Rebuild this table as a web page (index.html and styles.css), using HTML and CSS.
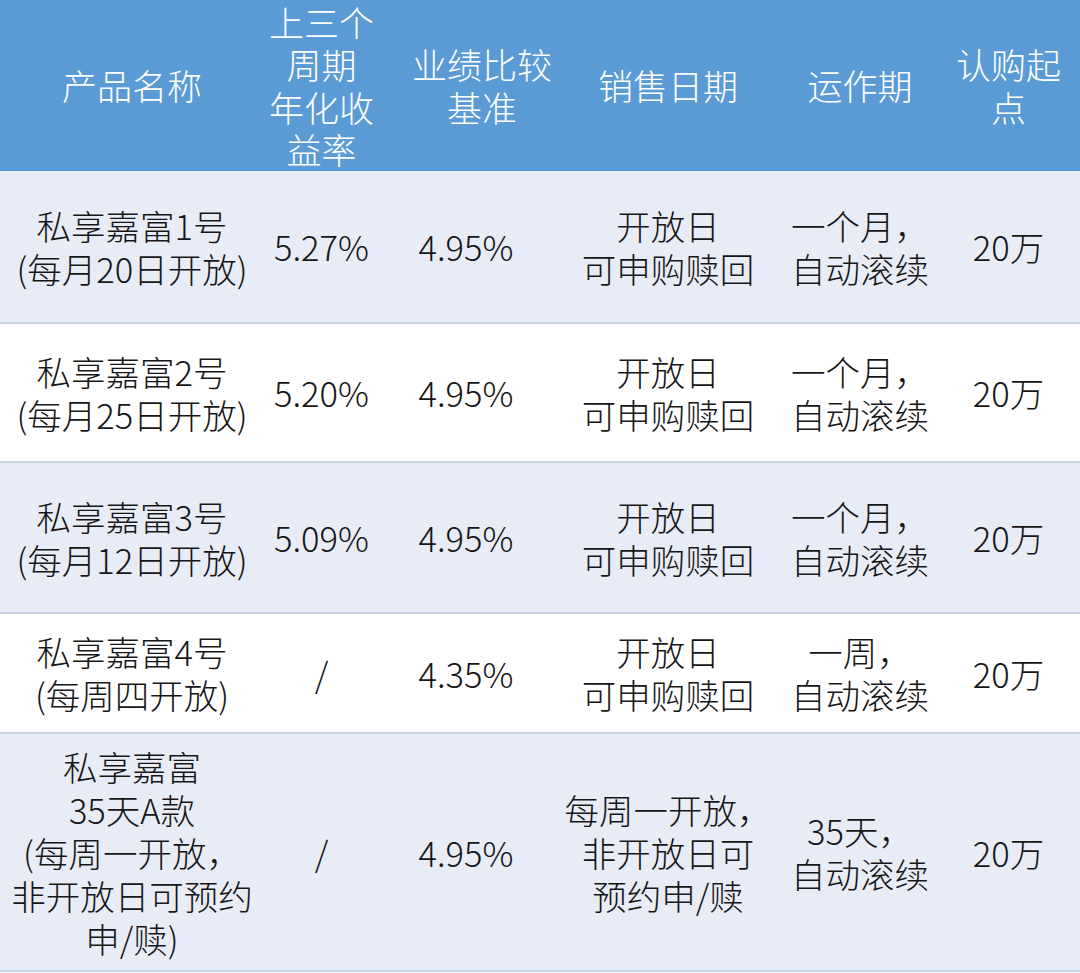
FILE: index.html
```html
<!DOCTYPE html>
<html lang="zh-CN">
<head>
<meta charset="utf-8">
<title>私享嘉富产品</title>
<link rel="stylesheet" href="styles.css">
</head>
<body>
<table class="products">
  <colgroup>
    <col class="c-name">
    <col class="c-yield">
    <col class="c-bench">
    <col class="c-sale">
    <col class="c-term">
    <col class="c-min">
  </colgroup>
  <thead>
    <tr class="head">
      <th>产品名称</th>
      <th>上三个<br>周期<br>年化收<br>益率</th>
      <th class="bench-head">业绩比较<br>基准</th>
      <th>销售日期</th>
      <th>运作期</th>
      <th>认购起<br>点</th>
    </tr>
  </thead>
  <tbody>
    <tr class="row shade r1">
      <td>私享嘉富1号<br>(每月20日开放)</td>
      <td>5.27%</td>
      <td>4.95%</td>
      <td>开放日<br>可申购赎回</td>
      <td>一个月，<br>自动滚续</td>
      <td>20万</td>
    </tr>
    <tr class="row plain r2">
      <td>私享嘉富2号<br>(每月25日开放)</td>
      <td>5.20%</td>
      <td>4.95%</td>
      <td>开放日<br>可申购赎回</td>
      <td>一个月，<br>自动滚续</td>
      <td>20万</td>
    </tr>
    <tr class="row shade r3">
      <td>私享嘉富3号<br>(每月12日开放)</td>
      <td>5.09%</td>
      <td>4.95%</td>
      <td>开放日<br>可申购赎回</td>
      <td>一个月，<br>自动滚续</td>
      <td>20万</td>
    </tr>
    <tr class="row plain r4">
      <td>私享嘉富4号<br>(每周四开放)</td>
      <td>/</td>
      <td>4.35%</td>
      <td>开放日<br>可申购赎回</td>
      <td>一周，<br>自动滚续</td>
      <td>20万</td>
    </tr>
    <tr class="row shade r5">
      <td>私享嘉富<br>35天A款<br>(每周一开放，<br>非开放日可预约<br>申/赎)</td>
      <td>/</td>
      <td>4.95%</td>
      <td>每周一开放，<br>非开放日可<br>预约申/赎</td>
      <td>35天，<br>自动滚续</td>
      <td>20万</td>
    </tr>
  </tbody>
</table>
</body>
</html>
```

FILE: styles.css
```css
html, body {
  margin: 0;
  padding: 0;
  background: #ffffff;
}

body {
  width: 1080px;
  height: 973px;
  overflow: hidden;
  font-family: "Noto Sans CJK SC", "Noto Sans", sans-serif;
  font-weight: 300;
}

.products {
  width: 1080px;
  table-layout: fixed;
  border-collapse: collapse;
  border-spacing: 0;
  font-size: 34.5px;
}

.c-name  { width: 264px; }
.c-yield { width: 115px; }
.c-bench { width: 174px; }
.c-sale  { width: 230px; }
.c-term  { width: 154px; }
.c-min   { width: 143px; }

.products th,
.products td {
  padding: 0;
  text-align: center;
  vertical-align: middle;
  white-space: nowrap;
}

.head {
  background: #5b9bd5;
  color: #ffffff;
  height: 171px;
}

.head th {
  font-weight: 300;
  font-size: 35px;
  line-height: 42.5px;
}

.head .bench-head {
  padding-left: 32px;
}

.row td {
  color: #161616;
  line-height: 43px;
  border-bottom: 2px solid #c8d4e2;
}

.shade { background: #e8ecf6; }
.plain { background: #ffffff; }

.r1 { height: 152px; }
.r2 { height: 139px; }
.r3 { height: 151px; }
.r4 { height: 120px; }
.r5 { height: 238px; }
```
